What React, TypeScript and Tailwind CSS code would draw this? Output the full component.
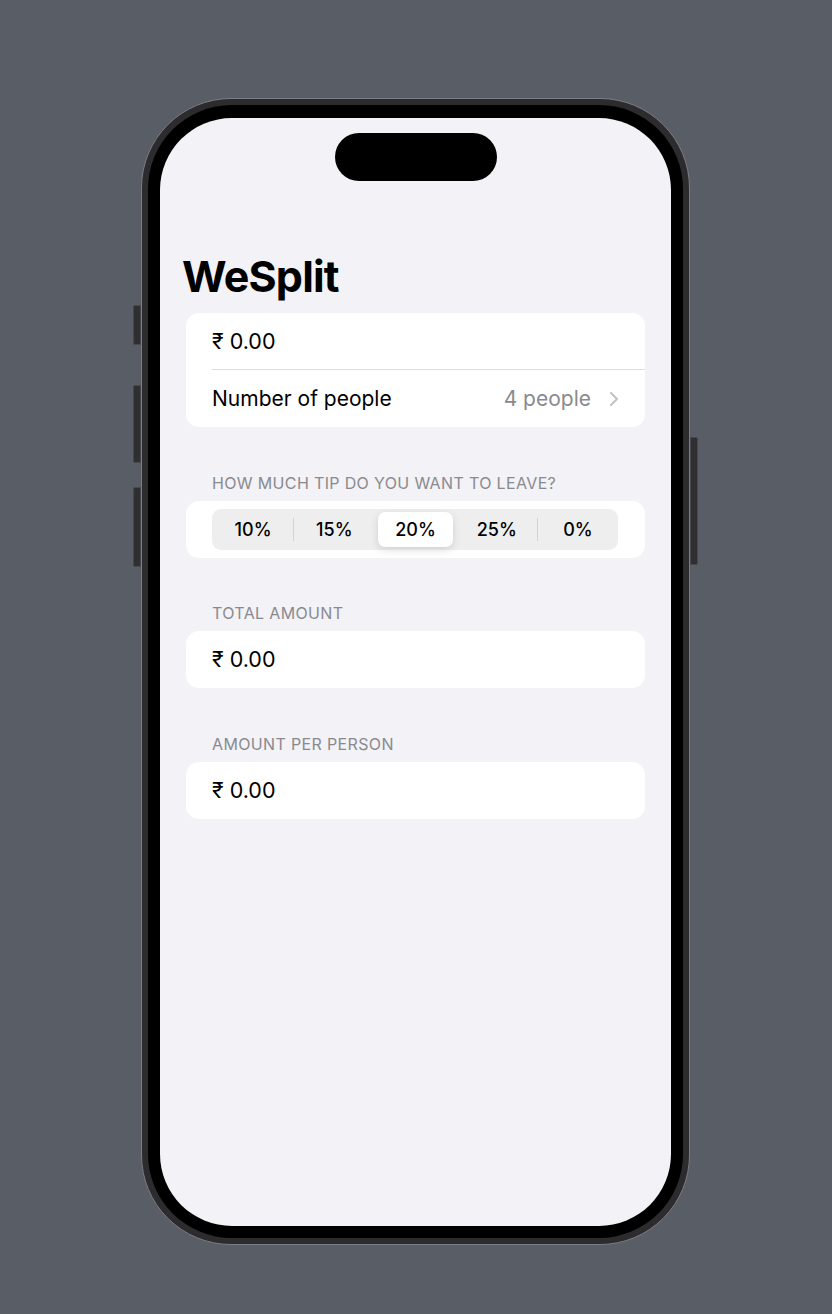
import React from "react";

const tips = ["10%", "15%", "20%", "25%", "0%"];

function Chevron() {
  return (
    <svg width="10" height="16" viewBox="0 0 10 16" fill="none">
      <path d="M2 2l6 6-6 6" stroke="#c4c4c7" strokeWidth="2.2" strokeLinecap="round" strokeLinejoin="round" />
    </svg>
  );
}

function SectionHeader({ children }: { children: React.ReactNode }) {
  return (
    <div className="mt-[45.5px] mb-[8px] pl-[52px] h-[20px] leading-[20px] text-[16px] text-[#8a8a8e] tracking-[0.35px]">
      {children}
    </div>
  );
}

function AmountCard() {
  return (
    <div className="mx-[26px] bg-white rounded-[13px] h-[57px] pl-[26px] flex items-center text-[21.5px] text-black">
      ₹ 0.00
    </div>
  );
}

function SideButton({ h, side }: { h: string; side: "l" | "r" }) {
  return (
    <div
      className={`w-[8px] ${h} bg-[#2f2f31] border border-[#46484d] ${
        side === "l" ? "rounded-l-[2px]" : "rounded-r-[2px]"
      }`}
    />
  );
}

export default function App() {
  return (
    <div
      className="w-[832px] h-[1314px] bg-[#595d66] pt-[98px] overflow-hidden"
      style={{ fontFamily: "Inter, 'Noto Sans', sans-serif" }}
    >
      <div className="ml-[133px] flex items-start">
        {/* left side buttons */}
        <div className="w-[8px] pt-[207px] flex flex-col">
          <SideButton h="h-[40px]" side="l" />
          <div className="h-[40px]" />
          <SideButton h="h-[78px]" side="l" />
          <div className="h-[24px]" />
          <SideButton h="h-[80px]" side="l" />
        </div>

        {/* phone body */}
        <div className="w-[549px] h-[1147px] rounded-[90px] bg-[#2c2c2e] border border-[#7c7d80] p-[6px]">
          <div className="w-full h-full rounded-[84px] bg-black pt-[13px] px-[12px] pb-[12px]">
            <div className="w-full h-full rounded-[72px] bg-[#f2f2f7] overflow-hidden pt-[15px]">
              {/* dynamic island */}
              <div className="mx-auto w-[162px] h-[48px] rounded-full bg-black" />

              <div className="mt-[69px] pl-[22px] text-[43px] leading-[52px] font-bold text-black tracking-[-0.8px]">
                WeSplit
              </div>

              <div className="mt-[11px] mx-[26px] bg-white rounded-[13px] pl-[26px]">
                <div className="h-[57px] flex items-center border-b border-[#dedee0] text-[21.5px] text-black">
                  ₹ 0.00
                </div>
                <div className="h-[57px] flex items-center justify-between pr-[26px] text-[21px]">
                  <span className="text-black">Number of people</span>
                  <span className="flex items-center gap-[18px] text-[#8a8a8e]">
                    4 people
                    <Chevron />
                  </span>
                </div>
              </div>

              <SectionHeader>HOW MUCH TIP DO YOU WANT TO LEAVE?</SectionHeader>
              <div className="mx-[26px] bg-white rounded-[13px] h-[57px] pl-[26px] pr-[27px] flex items-center">
                <div className="w-full h-[41px] rounded-[9px] bg-[#eeeeef] flex items-stretch py-[3px]">
                  {tips.map((t, i) => {
                    const selected = i === 2;
                    const showSep = i > 0 && i !== 2 && i !== 3;
                    return (
                      <div key={t} className="flex-1 flex items-center">
                        <div className={`w-px h-[23px] ${showSep ? "bg-[#d3d3d6]" : "bg-transparent"}`} />
                        {selected ? (
                          <div className="flex-1 h-full mx-[3px] rounded-[7px] bg-white shadow-[0_3px_8px_rgba(0,0,0,0.12),0_0_1px_rgba(0,0,0,0.06)] flex items-center justify-center text-[18px] font-medium text-black">
                            {t}
                          </div>
                        ) : (
                          <span className="flex-1 text-center text-[18px] font-medium text-black">{t}</span>
                        )}
                      </div>
                    );
                  })}
                </div>
              </div>

              <SectionHeader>TOTAL AMOUNT</SectionHeader>
              <AmountCard />

              <SectionHeader>AMOUNT PER PERSON</SectionHeader>
              <AmountCard />
            </div>
          </div>
        </div>

        {/* right side button */}
        <div className="w-[8px] pt-[339px] flex flex-col">
          <SideButton h="h-[128px]" side="r" />
        </div>
      </div>
    </div>
  );
}
